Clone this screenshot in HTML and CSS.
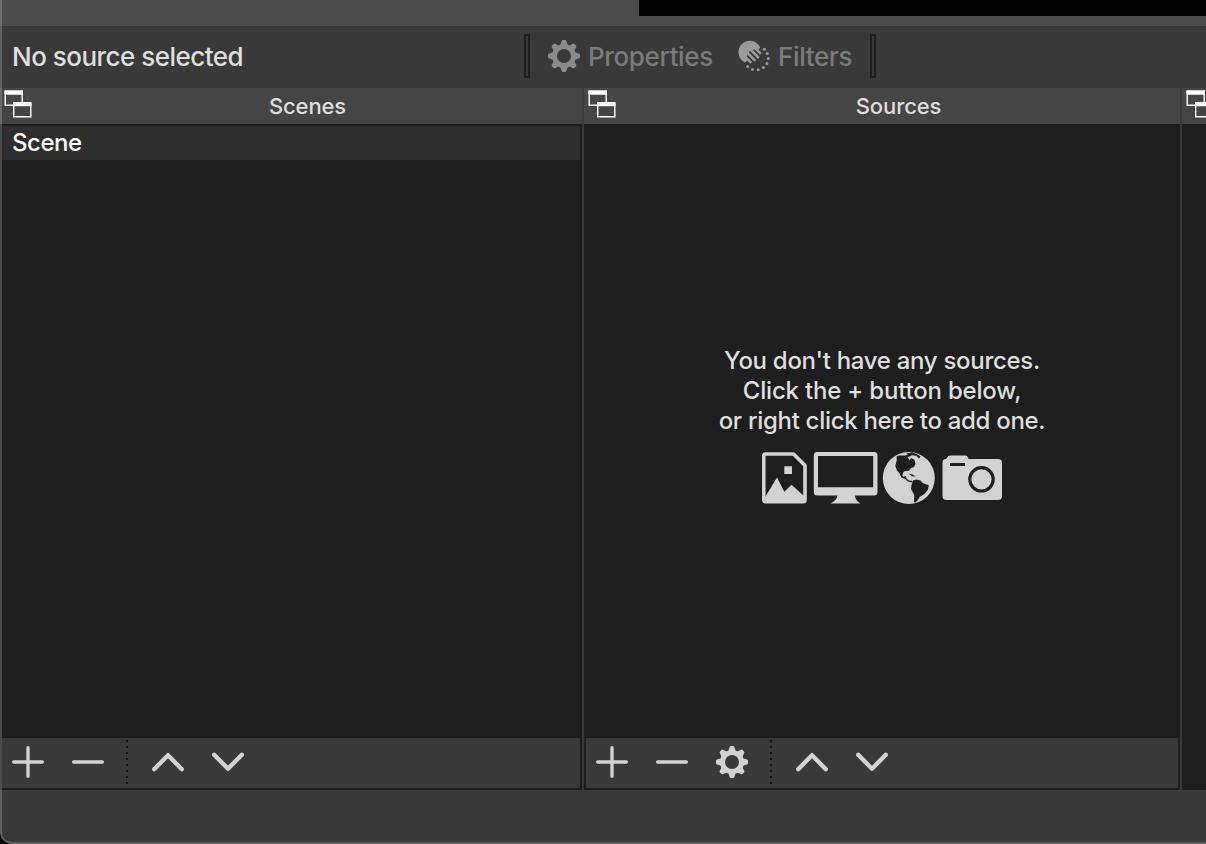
FILE: index.html
```html
<!DOCTYPE html>
<html lang="en">
<head>
<meta charset="utf-8">
<title>Scenes and Sources</title>
<link rel="stylesheet" href="styles.css">
</head>
<body>
<svg class="defs" aria-hidden="true">
  <defs>
    <path id="tooth" d="M12.2 5.5 L13.6 1 Q14 0 15 0 H17 Q18 0 18.4 1 L19.8 5.5Z"/>
    <symbol id="gear" viewBox="0 0 32 32">
      <circle cx="16" cy="16" r="9.5" fill="none" stroke="currentColor" stroke-width="5"/>
      <g fill="currentColor">
        <use href="#tooth"/><use href="#tooth" transform="rotate(45 16 16)"/>
        <use href="#tooth" transform="rotate(90 16 16)"/><use href="#tooth" transform="rotate(135 16 16)"/>
        <use href="#tooth" transform="rotate(180 16 16)"/><use href="#tooth" transform="rotate(225 16 16)"/>
        <use href="#tooth" transform="rotate(270 16 16)"/><use href="#tooth" transform="rotate(315 16 16)"/>
      </g>
    </symbol>
    <symbol id="float" viewBox="0 0 28 28">
      <path fill="none" stroke="#fff" stroke-width="1.4" d="M1.2 1V15.3H9M18.2 4V12M9.7 13V26.8H26.8V13"/>
      <path fill="#fff" d="M.5 .2H19V4.8H.5zM9 12H27.5V16.2H9z"/>
    </symbol>
    <symbol id="plus" viewBox="0 0 32 32"><path class="thin" d="M16 1.7V30.3M1.7 16H30.3"/></symbol>
    <symbol id="minus" viewBox="0 0 32 32"><path class="thin" d="M1.7 16H30.3"/></symbol>
    <symbol id="up" viewBox="0 0 32 32"><path class="thick" d="M2.2 23.2 16 9.2 29.8 23.2"/></symbol>
    <symbol id="down" viewBox="0 0 32 32"><path class="thick" d="M2.2 8.8 16 22.8 29.8 8.8"/></symbol>
  </defs>
</svg>
<main class="window">
  <section class="preview"><div class="canvas"></div></section>
  <section class="context">
    <span class="status">No source selected</span>
    <i class="grip"></i>
    <button class="action properties"><svg class="icon"><use href="#gear"/></svg><span>Properties</span></button>
    <button class="action filters">
      <svg class="icon" viewBox="0 0 32 32">
        <path fill="currentColor" d="M7.2 22.5A11.4 11.4 0 1 1 22.3 7.5L20 10Q13 8.5 10.5 12.5Q8 16 9 20.5Z"/>
        <path fill="none" stroke="currentColor" stroke-width="2.6" d="M6.5 16 13.2 22.8M8.5 11.8 17.3 20.8M12 9 20.8 18M15 5.8 22.8 13.8"/>
        <g fill="currentColor">
          <circle cx="26.4" cy="9.3" r="1.5"/><circle cx="29.2" cy="13.5" r="1.5"/><circle cx="30.4" cy="18.5" r="1.5"/>
          <circle cx="29" cy="23.5" r="1.5"/><circle cx="25.4" cy="27.5" r="1.5"/><circle cx="20.2" cy="29.8" r="1.5"/>
          <circle cx="14.5" cy="29.4" r="1.5"/><circle cx="9.6" cy="26.6" r="1.5"/>
        </g>
      </svg><span>Filters</span>
    </button>
    <i class="grip"></i>
  </section>
  <section class="docks">
    <article class="dock">
      <header class="title"><svg class="float"><use href="#float"/></svg><h2 class="scenes-title">Scenes</h2></header>
      <div class="list"><div class="row"><span>Scene</span></div></div>
      <footer class="tools">
        <svg class="icon"><use href="#plus"/></svg>
        <svg class="icon"><use href="#minus"/></svg>
        <i class="dotted"></i>
        <svg class="icon"><use href="#up"/></svg>
        <svg class="icon"><use href="#down"/></svg>
      </footer>
    </article>
    <article class="dock">
      <header class="title"><svg class="float"><use href="#float"/></svg><h2>Sources</h2></header>
      <div class="list empty">
        <p>You don't have any sources.</p>
        <p class="line-two">Click the + button below,</p>
        <p>or right click here to add one.</p>
        <svg class="kinds" viewBox="0 0 242 54">
          <path fill="none" stroke="currentColor" stroke-width="3.6" stroke-linejoin="round" d="M4.6 2H32.6L44 13.5V48Q44 49.8 42.2 49.8H4.6Q2.8 49.8 2.8 48V3.8Q2.8 2 4.6 2Z"/>
          <path fill="currentColor" d="M23.3 14.3H31V22H23.3zM3 47 16 25.5 23.3 39.8 30.5 32.8 44 45V50H3z"/>
          <g transform="translate(-1 0)">
            <path fill="currentColor" fill-rule="evenodd" d="M57 0H114Q117.5 0 117.5 3.5V40Q117.5 43.5 114 43.5H95Q95 48 100.5 51.5H70.5Q77 48 77.5 43.5H57.3Q53.8 43.5 53.8 40V3.5Q53.8 0 57 0ZM58 4V35.3H113.2V4Z"/>
            <path fill="currentColor" fill-rule="evenodd" d="M182.5 11Q182.5 7 186 7L188 4.5Q189 3.5 191 3.5H205Q208 3.5 208.5 7H238Q242 7 242 11V44Q242 48 238 48H186.5Q182.5 48 182.5 44ZM190 11V14H205V11ZM221.5 14A13.3 13.3 0 1 0 221.5 40.6A13.3 13.3 0 1 0 221.5 14ZM221.5 17.2A10.1 10.1 0 1 1 221.5 37.4A10.1 10.1 0 1 1 221.5 17.2Z"/>
          </g>
          <circle cx="147.8" cy="26" r="26" fill="currentColor"/>
          <g fill="#1e1e1e">
            <path d="M135.5 4.5 138 3.6 144 3.5 149 2.2 150 4 146.5 5 148.5 8 150.5 6 153.5 8 154.5 12 153 15 149.5 16.5 148 19 145 18.8 142.5 20 141.3 23 142 24.8 145 24.2 145.6 26.8 148 28.5 151.5 29 151 30.5 147 29.5 143.5 26.8 140.5 25.5 138.5 21.5 136 18.5 134.3 14 135.8 8Z"/>
            <path d="M145 1.5 151 .6 156 2 159.5 4.5 158 6.5 155.5 4 152 3.2 148 3.5ZM147.5 21.5 151.5 22.5 154.5 24.5 151 24.2Z"/>
            <path d="M152 28.5 155.5 27.5 159.5 28.5 162 31.2 167.8 33.3 167 37.5 163.5 42 158.5 45 157 48 154 50.8 153 49.5 153.3 43 150 37 150.6 32.5Z"/>
          </g>
        </svg>
      </div>
      <footer class="tools">
        <svg class="icon"><use href="#plus"/></svg>
        <svg class="icon"><use href="#minus"/></svg>
        <svg class="icon"><use href="#gear"/></svg>
        <i class="dotted"></i>
        <svg class="icon"><use href="#up"/></svg>
        <svg class="icon"><use href="#down"/></svg>
      </footer>
    </article>
    <article class="dock">
      <header class="title"><svg class="float"><use href="#float"/></svg></header>
      <div class="list"></div>
    </article>
  </section>
</main>
</body>
</html>
```
FILE: styles.css
```css
* { box-sizing: border-box; }
body { margin: 0; background: #000; font-family: Inter, "Liberation Sans", sans-serif; font-weight: 450; color: #dfdfdf; overflow: hidden; }
.defs { position: absolute; width: 0; height: 0; }
.window { position: relative; width: 1206px; height: 844px; overflow: hidden; display: flex; flex-direction: column; background: #393939; border-bottom-left-radius: 12px; }
/* Translucent edge of the window frame */
.window::after { content: ""; position: absolute; inset: 0; border: solid rgba(255, 255, 255, .2); border-width: 0 0 2px 2px; border-bottom-left-radius: 12px; pointer-events: none; }
.preview { height: 26px; background: #4c4c4c; padding-left: 639px; }
.canvas { height: 16px; background: #000; }
.context { height: 62px; display: flex; align-items: center; padding-bottom: 2px; font-size: 26px; }
.status { width: 512px; margin-left: 12px; white-space: nowrap; letter-spacing: -.52px; }
.grip { width: 6px; height: 44px; border: 2px solid #1e1e1e; }
.action { display: flex; align-items: center; gap: 8px; padding: 0; border: 0; background: none; font: inherit; color: #7b7b7b; white-space: nowrap; }
.action .icon { color: #8b8b8b; }
.properties { width: 190px; margin-left: 18px; letter-spacing: -.36px; }
.filters { width: 132px; letter-spacing: -.36px; }
.filters .icon { color: #9a9a9a; }
.icon { width: 32px; height: 32px; flex: none; color: #d2d2d2; }
.thin, .thick { fill: none; stroke: currentColor; stroke-linecap: round; stroke-linejoin: round; }
.thin { stroke-width: 3.4; }
.thick { stroke-width: 4.4; }
.docks { height: 702px; display: grid; grid-template-columns: 582px 596px 24px; gap: 2px; }
.dock { min-width: 0; display: flex; flex-direction: column; background: #1e1e1e; overflow: hidden; }
.title { height: 36px; flex: none; display: flex; background: #454545; padding: 2px 0 0 4px; }
.float { width: 28px; height: 28px; flex: none; }
.title h2 { flex: 1; margin: 0; padding-left: 1px; font-size: 22px; line-height: 32px; font-weight: inherit; letter-spacing: -.1px; text-align: center; }
.list { flex: 1; padding: 2px; }
.row { height: 34px; background: #2e2e2e; color: #fff; font-size: 24px; line-height: 34px; padding-left: 10px; letter-spacing: -.45px; }
.tools { height: 52px; border: solid #1e1e1e; border-width: 0 2px 2px; background: #393939; display: flex; align-items: center; gap: 28px; padding: 0 0 2px 10px; }
.dotted { width: 2px; height: 44px; margin: 0 -4px 0 -6px; background: repeating-linear-gradient(#111 0 2px, transparent 2px 6px); }
.empty { display: flex; flex-direction: column; align-items: center; padding-top: 222px; font-size: 24px; line-height: 30px; }
.empty p { margin: 0; letter-spacing: -.3px; white-space: nowrap; }
.empty .line-two { letter-spacing: -.2px; }
.kinds { width: 242px; height: 54px; margin-top: 16px; color: #d2d2d2; }
```
